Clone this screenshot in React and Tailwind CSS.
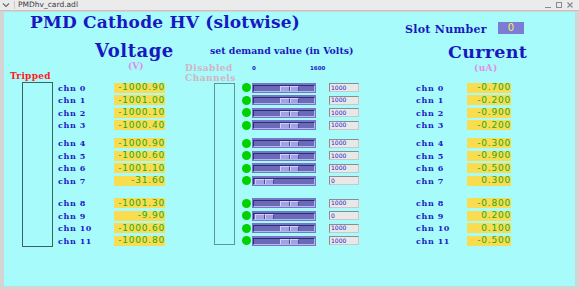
import React from "react"

const voltages = ["-1000.90", "-1001.00", "-1000.10", "-1000.40", "-1000.90", "-1000.60", "-1001.10", "-31.60", "-1001.30", "-9.90", "-1000.60", "-1000.80"]
const demands = ["1000", "1000", "1000", "1000", "1000", "1000", "1000", "0", "1000", "0", "1000", "1000"]
const currents = ["-0.700", "-0.200", "-0.900", "-0.200", "-0.300", "-0.900", "-0.500", "0.300", "-0.800", "0.200", "0.100", "-0.500"]

const groups = [[0, 1, 2, 3], [4, 5, 6, 7], [8, 9, 10, 11]]
const groupGap = ["", "mt-[5.5px]", "mt-[10px]"]

const serif = "font-['DejaVu_Serif',serif] font-bold"
const sans = "font-['DejaVu_Sans',sans-serif]"

function Rows({render}) {
  return (
    <div className="flex flex-col">
      {groups.map((g, gi) => (
        <div key={gi} className={groupGap[gi]}>
          {g.map((i) => (
            <div key={i} className="h-[12.5px] flex items-center">
              {render(i)}
            </div>
          ))}
        </div>
      ))}
    </div>
  )
}

function ChnLabel({i, w}) {
  return (
    <div className={`${w} ${serif} text-[8px] leading-none tracking-[0.6px] text-[#1c1cc8]`}>
      chn {i}
    </div>
  )
}

function Readback({value, w}) {
  return (
    <div className={`${w} h-[10px] bg-[#f9dc50] flex items-center justify-end ${sans} text-[9px] leading-none tracking-[0.8px] text-[#22aa22]`}>
      {value}
    </div>
  )
}

function Slider({value}) {
  return (
    <div className="w-[64px] h-[10px] bg-[#7676c6] pt-[2px] pl-px pr-px pb-px">
      <div className="h-full bg-[#6a6ab6] border-t border-l border-[#2e2e78] border-b border-r border-b-[#b6b6f2] border-r-[#b6b6f2] flex items-center">
        <div className={`${value === "0" ? "ml-[1px]" : "ml-[26px]"} w-[19px] h-[5px] flex`}>
          <div className="w-1/2 h-full bg-[#a2a2e2] border-t border-l border-[#d0d0f8] border-r border-r-[#4a4a98]" />
          <div className="w-1/2 h-full bg-[#a2a2e2] border-t border-l border-[#d0d0f8] border-r border-r-[#4a4a98]" />
        </div>
      </div>
    </div>
  )
}

function Entry({value}) {
  return (
    <div className={`w-[30px] h-[9px] bg-[#e8e8e8] border-t border-l border-[#8c8c8c] border-b border-r border-b-[#c8c8c8] border-r-[#c8c8c8] flex items-center pl-px ${sans} text-[6px] leading-none text-[#2424d0]`}>
      {value}
    </div>
  )
}

export default function App() {
  return (
    <div className="w-[579px] h-[289px] bg-[#d4d4d4] flex flex-col overflow-hidden">
      {/* title bar */}
      <div className="h-[11px] bg-[#ebebeb] border-b border-[#c4c4c4] flex items-center">
        <svg width="8" height="6" viewBox="0 0 8 6" className="ml-[2px]">
          <path d="M1 1.5 L4 4.5 L7 1.5" stroke="#6a6a6a" strokeWidth="1.2" fill="none" />
        </svg>
        <div className="w-px h-[8px] bg-[#c8c8c8] ml-[4px]" />
        <div className={`${sans} text-[7.5px] leading-none text-[#3a3a3a] ml-[3px]`}>PMDhv_card.adl</div>
        <div className="ml-auto flex items-center gap-[5px] mr-[6px]">
          <div className="w-[6px] h-[6px] flex items-end">
            <div className="w-full h-px bg-[#8a8a8a]" />
          </div>
          <div className="w-[6px] h-[6px] border border-[#8a8a8a]" />
          <svg width="6" height="6" viewBox="0 0 6 6">
            <path d="M0.5 0.5 L5.5 5.5 M5.5 0.5 L0.5 5.5" stroke="#8a8a8a" strokeWidth="1.2" />
          </svg>
        </div>
      </div>

      {/* display body */}
      <div className="flex-1 ml-[4px] mr-[4px] mb-[3px] mt-px bg-[#a8fbfb] flex flex-col">
        {/* row 1 */}
        <div className="h-[27px] flex items-start">
          <div className={`w-[401px] pl-[26px] mt-[1.5px] ${serif} text-[17px] leading-none tracking-[0.2px] text-[#1818c0]`}>
            PMD Cathode HV (slotwise)
          </div>
          <div className={`w-[93px] mt-[11.5px] ${serif} text-[11px] leading-none tracking-[0.3px] text-[#1818c0]`}>
            Slot Number
          </div>
          <div className={`mt-[10px] w-[26px] h-[12px] bg-[#7c7cd6] flex items-center justify-center ${sans} text-[10px] leading-none text-[#f4f440]`}>
            0
          </div>
        </div>

        {/* row 2 */}
        <div className="h-[22px] flex items-start">
          <div className={`w-[206px] pl-[91px] mt-[2.5px] ${serif} text-[18px] leading-none tracking-[0.5px] text-[#1818c0]`}>
            Voltage
          </div>
          <div className={`w-[238px] mt-[7px] ${serif} text-[9.4px] leading-none text-[#1818c0]`}>
            set demand value (in Volts)
          </div>
          <div className={`mt-[5px] ${serif} text-[17.5px] leading-none tracking-[0.3px] text-[#1818c0]`}>
            Current
          </div>
        </div>

        {/* row 3 */}
        <div className="h-[20.25px] flex items-start">
          <div className={`w-[124px] pl-[6px] mt-[11px] ${serif} text-[9px] leading-none tracking-[0.3px] text-[#ff1a1a]`}>
            Tripped
          </div>
          <div className={`w-[57px] mt-[1px] ${serif} text-[9px] leading-none text-[#e08ee8]`}>
            (V)
          </div>
          <div className={`w-[67px] mt-[1.5px] ${serif} text-[9px] leading-[10px] tracking-[0.5px] text-[#d2b4c6]`}>
            <div>Disabled</div>
            <div>Channels</div>
          </div>
          <div className={`w-[58px] mt-[5px] ${sans} text-[5.5px] leading-none font-bold text-[#2020c0]`}>0</div>
          <div className={`w-[164px] mt-[5px] ${sans} text-[5.5px] leading-none font-bold text-[#2020c0]`}>1600</div>
          <div className={`mt-[2.5px] ${serif} text-[9px] leading-none tracking-[0.4px] text-[#e08ee8]`}>
            (uA)
          </div>
        </div>

        {/* main area */}
        <div className="flex items-start pl-[18px]">
          <div className="w-[31px] h-[165px] mt-[0.75px] border border-[#3a6464]" />

          <div className="ml-[5px]">
            <Rows render={(i) => (
              <>
                <ChnLabel i={i} w="w-[56px]" />
                <Readback value={voltages[i]} w="w-[51px]" />
              </>
            )} />
          </div>

          <div className="ml-[49px] w-[21px] h-[162px] mt-[1.75px] border border-[#5c9696]" />

          <div className="ml-[7px]">
            <Rows render={(i) => (
              <>
                <div className="w-[9px] h-[9px] rounded-full bg-[#00d200]" />
                <div className="ml-px">
                  <Slider value={demands[i]} />
                </div>
                <div className="ml-[13px]">
                  <Entry value={demands[i]} />
                </div>
              </>
            )} />
          </div>

          <div className="ml-[57px]">
            <Rows render={(i) => (
              <>
                <ChnLabel i={i} w="w-[51px]" />
                <Readback value={currents[i]} w="w-[44px]" />
              </>
            )} />
          </div>
        </div>
      </div>
    </div>
  )
}
